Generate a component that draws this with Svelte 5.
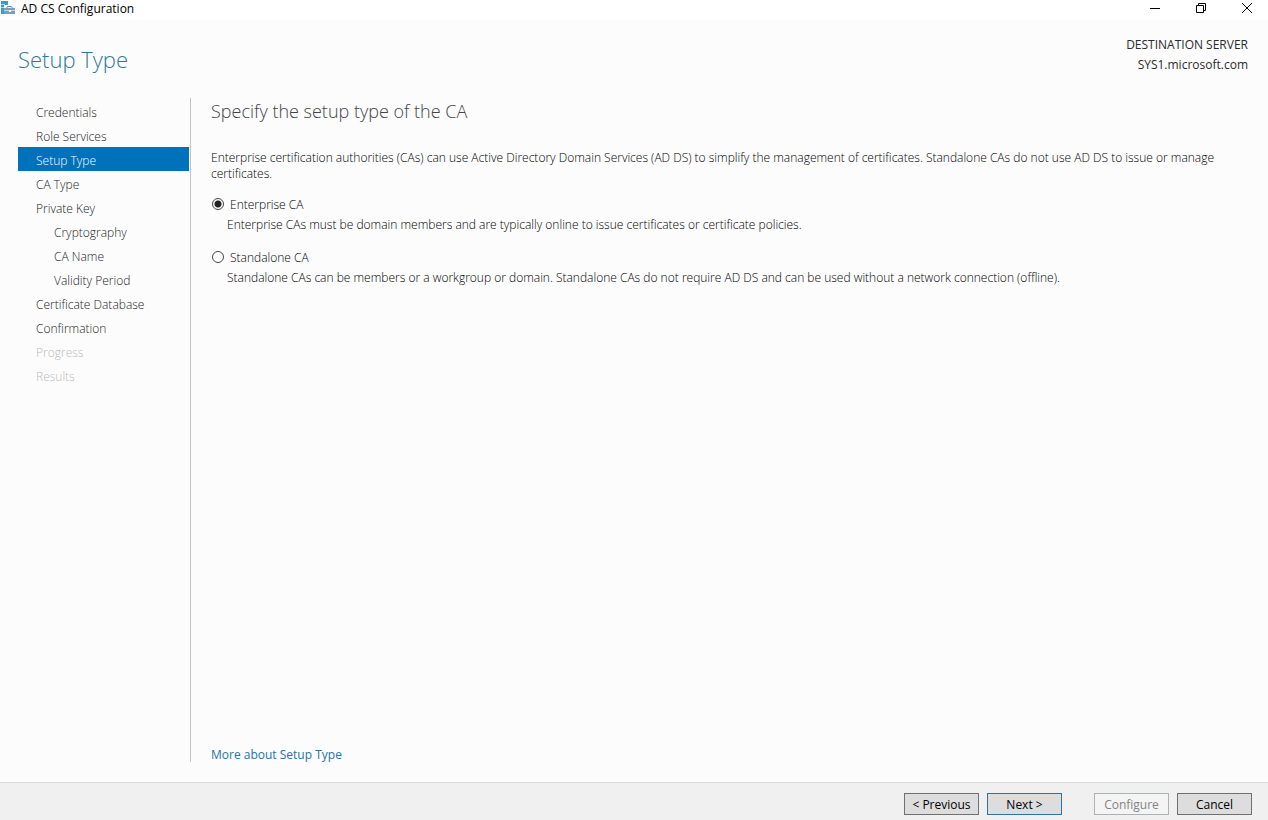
<script>
    let setupType = "enterprise";
    let current = "Setup Type";

    const steps = [
        { name: "Credentials" },
        { name: "Role Services" },
        { name: "Setup Type" },
        { name: "CA Type" },
        { name: "Private Key" },
        { name: "Cryptography", sub: true },
        { name: "CA Name", sub: true },
        { name: "Validity Period", sub: true },
        { name: "Certificate Database" },
        { name: "Confirmation" },
        { name: "Progress", disabled: true },
        { name: "Results", disabled: true }
    ];

    const types = [
        {
            id: "enterprise",
            label: "Enterprise CA",
            text: "Enterprise CAs must be domain members and are typically online to issue certificates or certificate policies."
        },
        {
            id: "standalone",
            label: "Standalone CA",
            text: "Standalone CAs can be members or a workgroup or domain. Standalone CAs do not require AD DS and can be used without a network connection (offline)."
        }
    ];
</script>

<div class="window">
    <div class="titlebar">
        <svg width="16" height="16" viewBox="0 0 16 16">
            <path d="M1 1h7v4H4v9H1z" fill="#3f9cc4" />
            <path d="M1 4.500h4M1 7.500h3" stroke="#a9d3e6" />
            <path d="M6.500 8.500l1-2h4l1 2" fill="none" stroke="#5c88a6" />
            <path d="M4 8h11v6H4z" fill="#7d9fb8" />
            <path d="M4 10.500h11" stroke="#c3d5e1" />
            <path d="M9 10h2v2H9z" fill="#fff" />
        </svg>
        <span class="caption">AD CS Configuration</span>
        <div class="window-buttons">
            <button aria-label="Minimize">
                <svg width="12" height="12" viewBox="0 0 12 12"><path d="M1 6.500h10" /></svg>
            </button>
            <button aria-label="Restore">
                <svg width="12" height="12" viewBox="0 0 12 12"><path d="M1.500 3.500h7v7h-7zM3.500 3.500v-2h7v7h-2" /></svg>
            </button>
            <button aria-label="Close">
                <svg width="12" height="12" viewBox="0 0 12 12"><path d="M1 1l10 10M11 1L1 11" /></svg>
            </button>
        </div>
    </div>

    <header>
        <h1>Setup Type</h1>
        <div class="server">
            <div>DESTINATION SERVER</div>
            <div>SYS1.microsoft.com</div>
        </div>
    </header>

    <div class="content">
        <nav>
            {#each steps as step}
                <button
                    class="step"
                    class:sub={step.sub}
                    class:active={step.name === current}
                    disabled={step.disabled}
                    on:click={() => (current = step.name)}>{step.name}</button>
            {/each}
        </nav>

        <main>
            <h2>Specify the setup type of the CA</h2>
            <p class="intro">
                Enterprise certification authorities (CAs) can use Active Directory Domain Services (AD DS) to simplify the management of certificates. Standalone CAs do not use AD DS to issue or manage certificates.
            </p>
            {#each types as type}
                <div class="option">
                    <label>
                        <input type="radio" name="setup-type" value={type.id} bind:group={setupType} />
                        {type.label}
                    </label>
                    <p>{type.text}</p>
                </div>
            {/each}
            <a href="#more">More about Setup Type</a>
        </main>
    </div>

    <footer>
        <button>&lt; Previous</button>
        <button class="default">Next &gt;</button>
        <button class="configure" disabled>Configure</button>
        <button>Cancel</button>
    </footer>
</div>

<style>
    :global(body) {
        margin: 0;
        background: #fcfcfc;
    }

    .window {
        display: flex;
        flex-direction: column;
        min-height: 100vh;
        font-family: "Open Sans", "Noto Sans", sans-serif;
        font-size: 12px;
        line-height: 16px;
        color: #000;
        background: #fcfcfc;
    }

    button {
        font: inherit;
    }

    h1, h2, p {
        margin: 0;
        font-weight: 300;
    }

    .titlebar {
        display: flex;
        height: 20px;
        background: #fff;
    }

    .caption {
        flex: 1;
        margin-left: 5px;
        line-height: 18px;
    }

    .window-buttons {
        display: flex;
    }

    .window-buttons button {
        width: 46px;
        height: 15px;
        padding: 0 0 0 4px;
        border: none;
        background: none;
    }

    .window-buttons svg {
        display: block;
        margin: 0 auto;
        fill: none;
        stroke: #000;
    }

    header {
        display: flex;
        justify-content: space-between;
        height: 78px;
        padding: 0 20px 0 18px;
        box-sizing: border-box;
    }

    h1 {
        padding-top: 24px;
        font-size: 22px;
        line-height: 30px;
        color: #2b7a94;
    }

    .server {
        padding-top: 15px;
        line-height: 20px;
        text-align: right;
        font-weight: 500;
        color: #2b2b2b;
    }

    .content {
        display: flex;
        flex: 1;
        margin-bottom: 20px;
    }

    nav {
        display: flex;
        flex-direction: column;
        width: 171px;
        padding: 1px 1px 0 18px;
        border-right: 1px solid #c3c3c3;
    }

    .step {
        height: 24px;
        padding: 3px 18px 0;
        border: none;
        background: none;
        color: #222;
        font-weight: 300;
        text-align: left;
        white-space: nowrap;
    }

    .step.sub {
        padding-left: 36px;
    }

    .step.active {
        background: #0072bc;
        color: #fff;
    }

    .step:disabled {
        color: #bbb;
    }

    main {
        display: flex;
        flex-direction: column;
        flex: 1;
        padding: 0 20px;
    }

    h2 {
        font-size: 18px;
        line-height: 26px;
        color: #444;
    }

    .intro {
        margin: 26px 0 15px;
    }

    .option {
        margin-bottom: 17px;
    }

    label {
        display: flex;
        align-items: center;
        gap: 5px;
        font-weight: 300;
    }

    .option p {
        padding: 4px 0 0 16px;
    }

    input {
        appearance: none;
        width: 12px;
        height: 12px;
        margin: 0 1px 2px;
        border: 1px solid #444;
        border-radius: 50%;
        background: #fff;
    }

    input:checked {
        background: radial-gradient(circle, #222 0 3px, #fff 4px);
    }

    a {
        align-self: flex-start;
        margin-top: auto;
        line-height: 14px;
        color: #2573a7;
        text-decoration: none;
    }

    footer {
        display: flex;
        justify-content: flex-end;
        gap: 8px;
        padding: 10px 16px 5px;
        border-top: 1px solid #d9d9d9;
        background: #f0f0f0;
    }

    footer button {
        width: 75px;
        height: 22px;
        padding: 2px 0 0;
        border: 1px solid #707070;
        background: #ddd;
        color: #000;
        line-height: 18px;
        white-space: nowrap;
    }

    footer .default {
        border-color: #2a72a8;
    }

    footer .configure {
        margin-left: 24px;
        border-color: #adb2b5;
        background: #f4f4f4;
        color: #838383;
    }
</style>
